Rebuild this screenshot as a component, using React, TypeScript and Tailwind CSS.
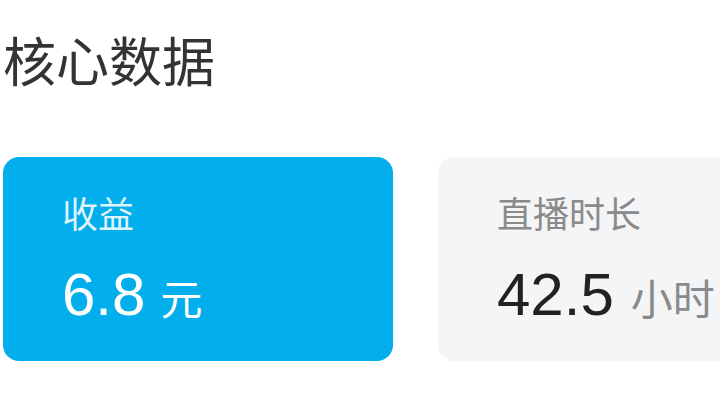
export default function App() {
  const font = { fontFamily: '"Liberation Sans", "Noto Sans CJK SC", sans-serif' };

  return (
    <div className="w-[720px] h-[405px] overflow-hidden bg-white pl-[3px]" style={font}>
      {/* 标题 */}
      <div className="pt-[37px] text-[53px] leading-none text-[#333333]">核心数据</div>

      {/* 数据卡片 */}
      <div className="mt-[67px] flex gap-[45px]">
        <div className="w-[390px] h-[204px] shrink-0 rounded-2xl bg-[#03aeec] pl-[59px] pt-[41px]">
          <div className="text-[36px] leading-none text-[#dff3fb]">收益</div>
          <div className="mt-[31px] flex items-baseline leading-none text-white">
            <span className="text-[60px]">6.8</span>
            <span className="ml-[15px] text-[42px]">元</span>
          </div>
        </div>

        <div className="w-[390px] h-[204px] shrink-0 rounded-2xl bg-[#f4f5f7] pl-[59px] pt-[41px]">
          <div className="text-[36px] leading-none text-[#8a8a8a]">直播时长</div>
          <div className="mt-[31px] flex items-baseline leading-none">
            <span className="text-[60px] text-[#222222]">42.5</span>
            <span className="ml-[17px] text-[42px] text-[#8a8a8a]">小时</span>
          </div>
        </div>
      </div>
    </div>
  );
}
